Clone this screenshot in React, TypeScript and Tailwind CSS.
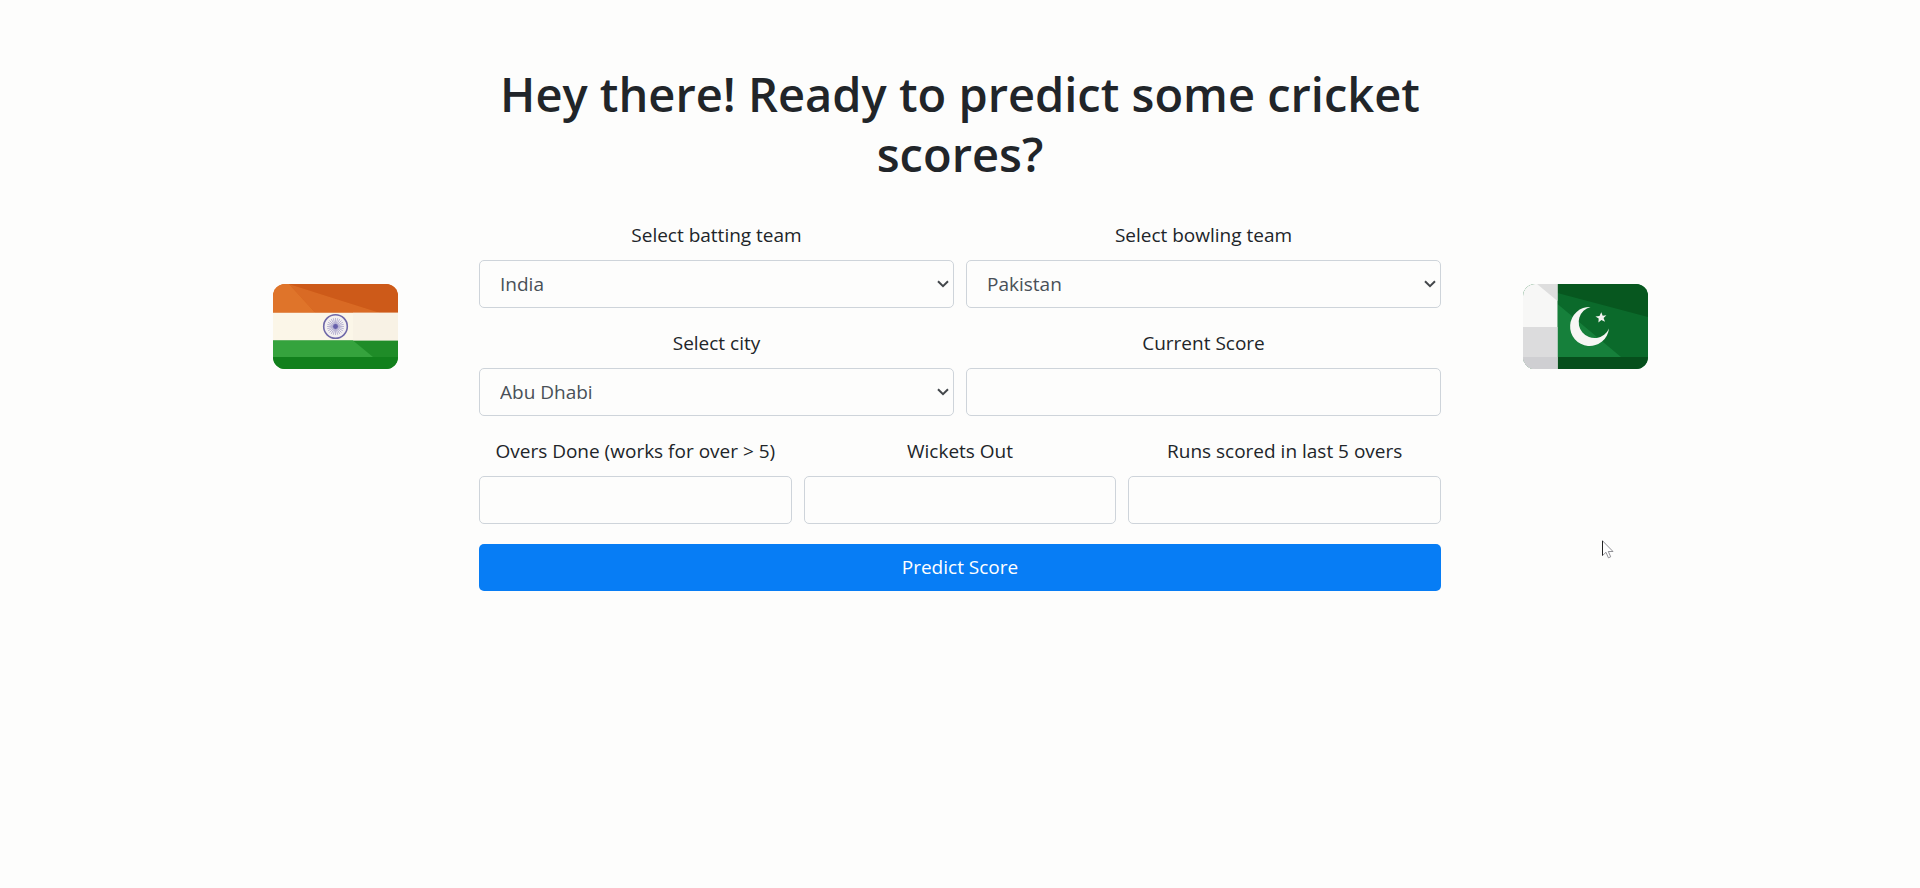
import React, { useState } from "react";
import type { ReactNode } from "react";

const teams = ["Australia", "Bangladesh", "England", "India", "New Zealand", "Pakistan", "South Africa", "Sri Lanka"];
const cities = ["Abu Dhabi", "Cape Town", "Colombo", "Dubai", "Lahore", "London", "Melbourne", "Mumbai"];

const control =
  "block h-12 w-full rounded-[5px] border border-[#ced4da] bg-transparent px-5 text-[19px] text-[#495057] focus:border-[#80bdff] focus:outline-none";

function Field({ id, label, children }: { id: string; label: string; children: ReactNode }) {
  return (
    <div className="flex min-w-0 flex-col gap-2.5">
      <label htmlFor={id} className="text-center text-[19px] leading-[30px]">
        {label}
      </label>
      {children}
    </div>
  );
}

function SelectField({ id, label, options, initial }: { id: string; label: string; options: string[]; initial: string }) {
  const [value, setValue] = useState(initial);
  return (
    <Field id={id} label={label}>
      <div className="relative">
        <select id={id} value={value} onChange={(e) => setValue(e.target.value)} className={`${control} appearance-none`}>
          {options.map((o) => (
            <option key={o}>{o}</option>
          ))}
        </select>
        <svg viewBox="0 0 12 8" className="pointer-events-none absolute top-5 right-[5px] h-2 w-3" fill="none" stroke="#43474b" strokeWidth="2" aria-hidden="true">
          <path d="M1 1.3 6 6.2 11 1.3" />
        </svg>
      </div>
    </Field>
  );
}

function NumberField({ id, label }: { id: string; label: string }) {
  return (
    <Field id={id} label={label}>
      <input id={id} type="text" inputMode="decimal" className={control} />
    </Field>
  );
}

function IndiaFlag() {
  const spokes = Array.from({ length: 12 }, (_, i) => i * 15);
  return (
    <svg viewBox="0 0 125 85" className="w-[125px]" role="img" aria-label="India">
      <clipPath id="india-clip">
        <rect width="125" height="85" rx="12" />
      </clipPath>
      <g clipPath="url(#india-clip)">
        <rect width="125" height="85" fill="#fbf6e8" />
        <rect width="125" height="28.5" fill="#d4641c" />
        <path d="M0 0H16L42 28.5H0Z" fill="#df742a" />
        <path d="M16 0 42 28.5H106L60 14Z" fill="#d96a24" />
        <path d="M16 0H125V28.5H106L60 14Z" fill="#cd5a19" />
        <rect y="56.5" width="125" height="28.5" fill="#1f8c28" />
        <path d="M0 56.5H80L100 73H0Z" fill="#35a33d" />
        <rect y="73" width="125" height="12" fill="#11801c" />
        <path d="M80 28.5H125V56.5H80Z" fill="#f6eee0" opacity=".4" />
      </g>
      <circle cx="62.5" cy="42.5" r="11.8" fill="#f3f0f0" stroke="#6f68a8" strokeWidth="1.6" />
      <g stroke="#837dba" strokeWidth=".5">
        {spokes.map((a) => (
          <path key={a} d="M62.5 34V51" transform={`rotate(${a} 62.5 42.5)`} />
        ))}
      </g>
      <circle cx="62.5" cy="42.5" r="2.4" fill="#655faa" />
    </svg>
  );
}

function PakistanFlag() {
  return (
    <svg viewBox="0 0 125 85" className="w-[125px]" role="img" aria-label="Pakistan">
      <clipPath id="pakistan-clip">
        <rect width="125" height="85" rx="12" />
      </clipPath>
      <g clipPath="url(#pakistan-clip)">
        <rect width="125" height="85" fill="#0b6a2b" />
        <path d="M34.5 0H125V33L76 20 34.5 9Z" fill="#07571f" />
        <path d="M34.5 20 98 73H34.5Z" fill="#16803b" />
        <rect y="73" width="125" height="12" fill="#064f1c" />
        <rect width="34.5" height="85" fill="#f7f7f6" />
        <path d="M14 0H34.5V17Z" fill="#dedede" />
        <rect y="43" width="34.5" height="42" fill="#dcdcdd" />
        <rect y="73" width="34.5" height="12" fill="#cfcfd2" />
      </g>
      <path d="M67.5 23A19.5 19.5 0 1 0 86 44.5A15.8 15.8 0 1 1 67.5 23Z" fill="#f6f6f4" />
      <path d="M78.3 28.2 79.7 31.8 83.4 31.3 80.6 34 82 37.8 78.4 36 75.4 38.5 75.7 34.5 72.4 32.6 76.5 31.9Z" fill="#f2f2f0" />
    </svg>
  );
}

export default function App() {
  return (
    <main className="relative min-h-screen bg-[#fdfdfc] pt-16 pb-10 font-['Open_Sans','Noto_Sans',sans-serif] text-[#212529]">
      <div className="mx-auto grid max-w-[1500px] grid-cols-[1fr_4fr_1fr]">
        <div className="flex items-start justify-center pt-[220px]">
          <IndiaFlag />
        </div>
        <div className="flex min-w-0 flex-col px-[19px]">
          <h1 className="text-center text-[47px] leading-[60px] font-semibold">Hey there! Ready to predict some cricket scores?</h1>
          <form className="mt-9 flex flex-col gap-5" onSubmit={(e) => e.preventDefault()}>
            <div className="grid grid-cols-2 gap-3">
              <SelectField id="batting" label="Select batting team" options={teams} initial="India" />
              <SelectField id="bowling" label="Select bowling team" options={teams} initial="Pakistan" />
            </div>
            <div className="grid grid-cols-2 gap-3">
              <SelectField id="city" label="Select city" options={cities} initial="Abu Dhabi" />
              <NumberField id="score" label="Current Score" />
            </div>
            <div className="grid grid-cols-3 gap-3">
              <NumberField id="overs" label="Overs Done (works for over > 5)" />
              <NumberField id="wickets" label="Wickets Out" />
              <NumberField id="runs" label="Runs scored in last 5 overs" />
            </div>
            <button type="submit" className="h-[47px] w-full rounded-[5px] bg-[#077df5] text-[19px] text-white">
              Predict Score
            </button>
          </form>
        </div>
        <div className="flex items-start justify-center pt-[220px]">
          <PakistanFlag />
        </div>
      </div>
      <svg viewBox="0 0 12 19" className="pointer-events-none absolute top-[540px] left-[1602px] h-[19px] w-3" aria-hidden="true">
        <path d="M.5.8V15.5L4 12.3 6.4 17.8 8.7 16.8 6.3 11.5H11Z" fill="#fff" stroke="#77777e" strokeWidth=".8" />
        <path d="M.5.8V15.5" stroke="#222" />
      </svg>
    </main>
  );
}
